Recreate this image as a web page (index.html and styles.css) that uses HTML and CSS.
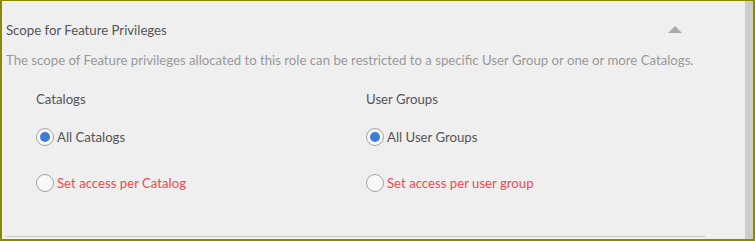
FILE: index.html
```html
<!DOCTYPE html>
<html lang="en">
<head>
    <meta charset="UTF-8">
    <meta name="viewport" content="width=device-width, initial-scale=1.0">
    <title>Scope for Feature Privileges</title>
    <link rel="stylesheet" href="styles.css">
</head>
<body>
    <div class="frame">
        <div class="panel">
            <div class="panel-head">
                <h3 class="title">Scope for Feature Privileges</h3>
                <span class="caret"></span>
            </div>
            <p class="desc">The scope of Feature privileges allocated to this role can be restricted to a specific User Group or one or more Catalogs.</p>
            <div class="columns">
                <div class="column">
                    <div class="column-label">Catalogs</div>
                    <label class="option">
                        <input type="radio" name="catalogs" checked>
                        <span>All Catalogs</span>
                    </label>
                    <label class="option option-link">
                        <input type="radio" name="catalogs">
                        <span>Set access per Catalog</span>
                    </label>
                </div>
                <div class="column">
                    <div class="column-label">User Groups</div>
                    <label class="option">
                        <input type="radio" name="groups" checked>
                        <span>All User Groups</span>
                    </label>
                    <label class="option option-link">
                        <input type="radio" name="groups">
                        <span>Set access per user group</span>
                    </label>
                </div>
            </div>
            <div class="rule"></div>
        </div>
        <div class="scrollbar"></div>
    </div>
</body>
</html>
```

FILE: styles.css
```css
body {
    margin: 0;
    font-family: Lato, "Open Sans", sans-serif;
    font-size: 13.2px;
    color: #555;
}
.frame {
    display: flex;
    height: 238px;
    border: 2px solid #8a8a00;
    border-top-width: 1px;
    background-color: #efefef;
}
.panel {
    flex: 1;
    padding: 19px 0 0 4px;
}
.panel-head {
    display: flex;
    justify-content: space-between;
    align-items: center;
    padding-right: 63px;
}
.title {
    margin: 0;
    font-size: 13.2px;
    font-weight: normal;
    line-height: 20px;
    color: #555;
}
.caret {
    width: 0;
    height: 0;
    border-left: 7px solid transparent;
    border-right: 7px solid transparent;
    border-bottom: 7px solid #aaa;
    margin-top: -2px;
}
.desc {
    margin: 10px 0 0;
    line-height: 20px;
    color: #999;
}
.columns {
    display: flex;
    padding-left: 30px;
    margin-top: 19px;
}
.column {
    width: 330px;
}
.column-label {
    line-height: 20px;
    margin-bottom: 18px;
}
.option {
    display: flex;
    align-items: center;
    gap: 3px;
    height: 20px;
    margin-bottom: 26px;
    cursor: pointer;
}
.option-link {
    color: #ef4a52;
    margin-bottom: 0;
}
.option input {
    appearance: none;
    width: 18px;
    height: 18px;
    margin: 0;
    border: 1.5px solid #a3a3a3;
    border-radius: 50%;
    background-color: #f8f8f8;
    display: grid;
    place-items: center;
}
.option input:checked::after {
    content: "";
    width: 10px;
    height: 10px;
    border-radius: 50%;
    background-color: #3b7dd8;
}
.rule {
    height: 1px;
    margin: 43px 40px 0 0;
    background-color: #c8c8c8;
}
.scrollbar {
    width: 8px;
    background-color: #cdcdcd;
}
```
